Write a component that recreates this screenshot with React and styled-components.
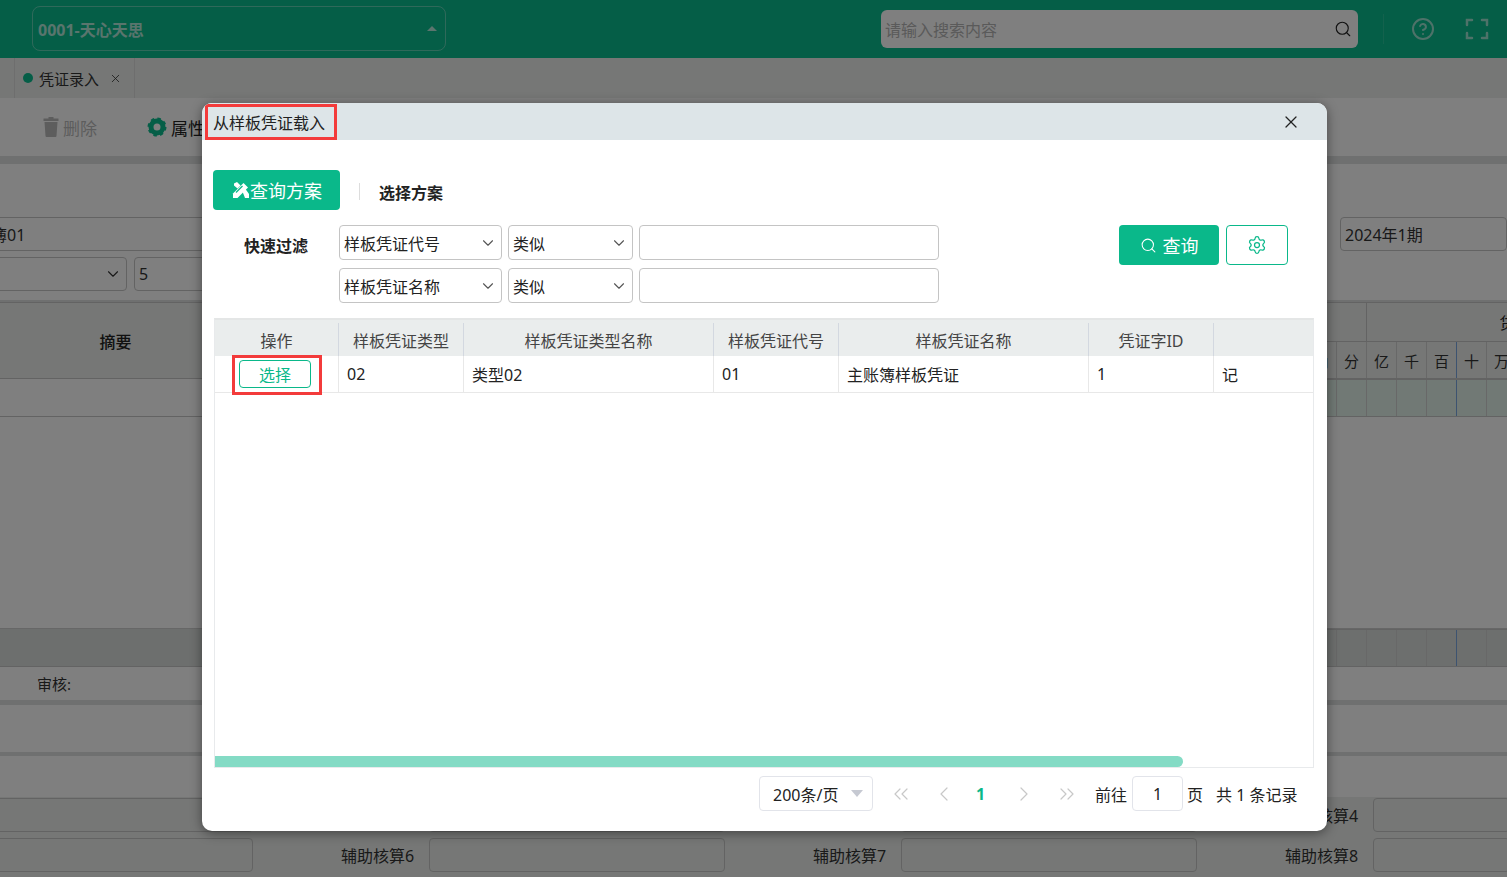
import React from "react"
import styled, { createGlobalStyle } from "styled-components"
import {
  ChevronDown,
  ChevronLeft,
  ChevronRight,
  ChevronsLeft,
  ChevronsRight,
  CircleHelp,
  Search,
  Settings,
  X,
} from "lucide-react"

const GlobalStyle = createGlobalStyle`
  html, body {
    margin: 0;
    height: 877px;
    overflow: hidden;
    background: #fff;
    font-family: "Noto Sans", "Noto Sans CJK SC", sans-serif;
    font-size: 16px;
    color: #222;
  }
  * { box-sizing: border-box; }
`

const Page = styled.div`
  position: relative;
  width: 1507px;
  height: 877px;
  overflow: hidden;
  display: flex;
  flex-direction: column;
`

const Header = styled.header`
  height: 58px;
  flex: none;
  background: #0abc8e;
  display: flex;
  align-items: center;
  padding: 0 18px 0 32px;
`

const OrgSelect = styled.div`
  width: 414px;
  height: 45px;
  margin-top: -1px;
  border: 1px solid rgba(255, 255, 255, 0.35);
  border-radius: 8px;
  display: flex;
  align-items: center;
  justify-content: space-between;
  padding: 0 8px 0 5px;
  color: rgba(255, 255, 255, 0.7);
  font-weight: 700;
  font-size: 16px;
`

const Caret = styled.span`
  width: 0;
  height: 0;
  border-left: 5px solid transparent;
  border-right: 5px solid transparent;
  border-bottom: 5px solid rgba(255, 255, 255, 0.7);
`

const SearchBox = styled.div`
  width: 477px;
  height: 38px;
  margin-left: auto;
  background: #fff;
  border-radius: 6px;
  display: flex;
  align-items: center;
  justify-content: space-between;
  padding: 0 6px 0 4px;
  color: #b4b4b4;
  & svg { color: #222; }
`

const HeaderDivider = styled.span`
  width: 1px;
  height: 30px;
  margin: 0 27px 0 25px;
  background: rgba(255, 255, 255, 0.12);
`

const HeaderIcon = styled.span`
  display: flex;
  color: rgba(255, 255, 255, 0.6);
  margin-right: ${(p) => p.$gap || 0}px;
`

const TabBar = styled.nav`
  height: 40px;
  flex: none;
  background: #ecefec;
  padding-left: 14px;
  display: flex;
`

const Tab = styled.div`
  width: 121px;
  border-left: 1px solid #dcdcdc;
  border-right: 1px solid #dcdcdc;
  display: flex;
  align-items: center;
  gap: 6px;
  padding-left: 8px;
  font-size: 15px;
  color: #333;
  & svg { margin-left: 4px; }
`

const Dot = styled.span`
  width: 10px;
  height: 10px;
  border-radius: 50%;
  background: #0abc8e;
`

const Toolbar = styled.div`
  height: 58px;
  flex: none;
  background: #fff;
  border-bottom: 0;
  display: flex;
  align-items: center;
  padding-left: 43px;
  gap: 50px;
`

const ToolButton = styled.div`
  display: flex;
  align-items: center;
  gap: 4px;
  color: ${(p) => (p.$muted ? "#bbb" : "#222")};
  font-size: 17px;
`

const ThickLine = styled.div`
  height: ${(p) => p.$h}px;
  flex: none;
  background: #dfe0e0;
`

const FormArea = styled.section`
  height: 136px;
  flex: none;
  background: #fff;
  padding-top: 53px;
  display: flex;
  flex-direction: column;
  gap: 6px;
`

const FormRow = styled.div`
  display: flex;
  gap: 7px;
  height: 34px;
  margin-left: -30px;
`

const Field = styled.div`
  width: ${(p) => p.$w}px;
  height: 34px;
  flex: none;
  margin-left: ${(p) => p.$ml || 0}px;
  border: 1px solid #c6c6c6;
  border-radius: 4px;
  display: flex;
  align-items: center;
  justify-content: space-between;
  padding: 0 4px;
  white-space: nowrap;
  color: #333;
`

const RowLabel = styled.span`
  flex: none;
  width: 40px;
  margin-left: auto;
  line-height: 34px;
  white-space: nowrap;
  color: #333;
`

const VoucherGrid = styled.div`
  display: grid;
  grid-template-columns: 232px 1fr 330px 141px;
  flex: none;
  overflow: hidden;
`

const HeadCell = styled.div`
  background: #ecefec;
  border-top: 1px solid #c6c6c6;
  border-bottom: 1px solid #c6c6c6;
  border-right: 1px solid #c6c6c6;
  height: 77px;
  display: flex;
  align-items: center;
  justify-content: center;
  font-weight: 500;
  color: #222;
`

const UnitGroup = styled.div`
  display: flex;
  flex-direction: column;
  height: ${(p) => p.$h}px;
  overflow: hidden;
`

const UnitTitle = styled.div`
  height: 39px;
  width: 330px;
  flex: none;
  background: #ecefec;
  border-top: 1px solid #c6c6c6;
  display: flex;
  align-items: center;
  justify-content: center;
  border-left: 1px solid #c6c6c6;
`

const UnitRow = styled.div`
  display: flex;
  height: ${(p) => p.$h}px;
  flex: none;
  background: ${(p) => p.$bg};
  border-top: 1px solid #c6c6c6;
  border-bottom: 1px solid #c6c6c6;
`

const UnitCell = styled.div`
  width: 30px;
  flex: none;
  border-left: 1px solid ${(p) => (p.$accent ? "#7aa7e0" : "#d0d0d0")};
  display: flex;
  align-items: center;
  justify-content: center;
  font-size: 15px;
  color: #333;
`

const BodyCell = styled.div`
  height: 38px;
  background: ${(p) => p.$bg};
  border-bottom: 1px solid #c6c6c6;
  border-right: 1px solid #d0d0d0;
`

const BlankArea = styled.div`
  height: ${(p) => p.$h}px;
  flex: none;
  background: ${(p) => p.$bg || "#fff"};
  border-bottom: ${(p) => (p.$line ? "1px solid #cfcfcf" : "0")};
  display: flex;
  align-items: center;
  padding-left: 37px;
  font-size: 15px;
  color: #333;
`

const AuxRow = styled.div`
  height: 40px;
  flex: none;
  background: #ecefec;
  padding-top: 1px;
  display: grid;
  grid-template-columns: 253px 88px 75px 13px 296px 88px 75px 13px 296px 88px 75px 13px 137px;
  align-items: start;
  font-size: 16px;
  color: #333;
`

const AuxInput = styled.div`
  height: 34px;
  grid-column: ${(p) => p.$col};
  border: 1px solid #c6c6c6;
  border-radius: 4px;
  margin-left: ${(p) => p.$bleed || 0}px;
`

const AuxLabel = styled.span`
  grid-column: ${(p) => p.$col};
  line-height: 36px;
  white-space: nowrap;
`

const Mask = styled.div`
  position: absolute;
  inset: 0;
  background: rgba(0, 0, 0, 0.5);
`

const Dialog = styled.div`
  position: absolute;
  top: 103px;
  left: 202px;
  width: 1125px;
  height: 728px;
  background: #fff;
  border-radius: 10px;
  box-shadow: 0 2px 12px rgba(0, 0, 0, 0.45);
  overflow: hidden;
`

const DialogHead = styled.div`
  height: 37px;
  background: #dde5e8;
  display: flex;
  align-items: center;
  justify-content: space-between;
  padding: 0 26px 0 11px;
  font-size: 16px;
  color: #222;
`

const PlanRow = styled.div`
  display: flex;
  align-items: center;
  margin: 30px 0 0 11px;
`

const PlanButton = styled.div`
  width: 127px;
  height: 40px;
  background: #0ab88a;
  border-radius: 4px;
  color: #fff;
  font-size: 18px;
  display: flex;
  align-items: center;
  padding-left: 19px;
`

const PlanDivider = styled.span`
  width: 1px;
  height: 17px;
  margin: 3px 19px 0;
  background: #ddd;
`

const PlanTitle = styled.span`
  font-weight: 700;
  font-size: 16px;
  margin-top: 3px;
  color: #222;
`

const FilterArea = styled.div`
  display: flex;
  margin: 15px 0 0 42px;
  height: 78px;
`

const FilterLabel = styled.div`
  width: 95px;
  font-weight: 700;
  color: #222;
  line-height: 24px;
  padding-top: 9px;
`

const FilterRows = styled.div`
  display: flex;
  flex-direction: column;
  gap: 8px;
`

const FilterRow = styled.div`
  display: flex;
  gap: 6px;
`

const SelectBox = styled.div`
  width: ${(p) => p.$w}px;
  height: 35px;
  border: 1px solid #c4c4c4;
  border-radius: 4px;
  background: #fff;
  display: flex;
  align-items: center;
  justify-content: space-between;
  padding: 0 4px;
  color: #222;
  & svg { color: #555; }
`

const FilterActions = styled.div`
  display: flex;
  gap: 7px;
  margin-left: 180px;
`

const QueryButton = styled.div`
  width: 100px;
  height: 40px;
  background: #0ab88a;
  border-radius: 4px;
  color: #fff;
  font-size: 18px;
  display: flex;
  align-items: center;
  justify-content: center;
  gap: 6px;
`

const GearButton = styled.div`
  width: 62px;
  height: 40px;
  border: 1px solid #0ab88a;
  border-radius: 4px;
  color: #0ab88a;
  display: flex;
  align-items: center;
  justify-content: center;
`

const TableWrap = styled.div`
  position: relative;
  width: 1100px;
  height: 450px;
  margin: 15px 0 0 12px;
  border: 1px solid #e8eaec;
  border-top: 2px solid #e4e6e6;
`

const TableRow = styled.div`
  display: grid;
  grid-template-columns: 124px 125px 250px 125px 250px 125px 1fr;
  height: ${(p) => p.$h}px;
  background: ${(p) => (p.$head ? "#eaeded" : "#fff")};
  border-bottom: ${(p) => (p.$head ? "0" : "1px solid #e8e8e8")};
`

const TableHead = styled.div`
  border-right: ${(p) => (p.$last ? "0" : "1px solid #d3d8e0")};
  margin: 3px 0 0;
  display: flex;
  align-items: center;
  justify-content: center;
  color: #444;
`

const TableCell = styled.div`
  border-right: ${(p) => (p.$last ? "0" : "1px solid #e8e8e8")};
  display: flex;
  align-items: center;
  justify-content: ${(p) => (p.$center ? "center" : "flex-start")};
  padding-left: ${(p) => (p.$center ? 0 : 8)}px;
  color: #222;
`

const PickButton = styled.div`
  width: 72px;
  height: 28px;
  margin-right: 3px;
  border: 1px solid #0ab88a;
  border-radius: 4px;
  color: #0ab88a;
  display: flex;
  align-items: center;
  justify-content: center;
`

const ScrollThumb = styled.div`
  position: absolute;
  left: 0;
  bottom: 0;
  width: 968px;
  height: 11px;
  border-radius: 0 6px 6px 0;
  background: #84dbc5;
`

const Pager = styled.div`
  display: flex;
  align-items: center;
  height: 35px;
  margin-top: 8px;
  padding-left: 557px;
  color: #222;
`

const PageSize = styled.div`
  width: 114px;
  height: 35px;
  border: 1px solid #e2e4ea;
  border-radius: 4px;
  display: flex;
  align-items: center;
  justify-content: space-between;
  padding: 0 9px 0 13px;
`

const PageCaret = styled.span`
  width: 0;
  height: 0;
  border-left: 6px solid transparent;
  border-right: 6px solid transparent;
  border-top: 7px solid #c6c9d2;
`

const PageNav = styled.div`
  width: ${(p) => p.$w}px;
  display: flex;
  justify-content: center;
  color: #c8c8c8;
`

const CurrentPage = styled.span`
  width: 43px;
  text-align: center;
  color: #0ab88a;
  font-weight: 700;
`

const PageInput = styled.div`
  width: 51px;
  height: 35px;
  margin: 0 4px 0 5px;
  border: 1px solid #e2e4ea;
  border-radius: 4px;
  display: flex;
  align-items: center;
  justify-content: center;
`

const PageTotal = styled.span`
  margin-left: 13px;
  white-space: nowrap;
`

const Annotation = styled.div`
  position: absolute;
  top: ${(p) => p.$top}px;
  left: ${(p) => p.$left}px;
  width: ${(p) => p.$w}px;
  height: ${(p) => p.$h}px;
  border: 3px solid #f33b3b;
  pointer-events: none;
`

function ToolsIcon() {
  return (
    <svg width="18" height="18" viewBox="0 0 18 18" fill="#fff">
      <path d="M1 12.5 11.5 2l4.5 4.5L5.5 17H1z" />
      <path d="M2 2.5 5 1l3.5 3.5-3 3L2 4.500z" />
      <path d="M10.500 10.500 13.500 8 17 13v4h-4z" />
      <path d="M4 11.500l6.500-6.500" stroke="#0ab88a" strokeWidth="1.200" />
    </svg>
  )
}

function TrashIcon() {
  return (
    <svg width="16" height="20" viewBox="0 0 16 20" fill="#bbb">
      <path d="M5.500 0h5v1.500h5V4H.500V1.500h5z" />
      <path d="M1.500 5h13l-1 14a1 1 0 0 1-1 1h-9a1 1 0 0 1-1-1z" />
    </svg>
  )
}

function GearIcon() {
  return (
    <svg width="20" height="20" viewBox="0 0 20 20">
      <circle cx="10" cy="10" r="6" fill="none" stroke="#0abc8e" strokeWidth="5" />
      <circle cx="10" cy="10" r="8" fill="none" stroke="#0abc8e" strokeWidth="3" strokeDasharray="3.300 3" />
    </svg>
  )
}

function FullscreenIcon() {
  return (
    <svg width="24" height="24" viewBox="0 0 24 24" fill="none" stroke="currentColor" strokeWidth="2.500" strokeLinecap="round">
      <path d="M2 8V3h5M17 3h5v5M22 16v5h-5M7 21H2v-5" />
    </svg>
  )
}

const debitUnits = ["亿", "千", "百", "十", "万", "千", "百", "十", "元", "角", "分"]
const creditUnits = ["亿", "千", "百", "十", "万"]
const columns = ["操作", "样板凭证类型", "样板凭证类型名称", "样板凭证代号", "样板凭证名称", "凭证字ID", ""]

function Units({ units, labels, bg, h }) {
  return (
    <UnitRow $bg={bg} $h={h}>
      {units.map((u, i) => (
        <UnitCell key={i} $accent={i === 3 || i === 6}>
          {labels && u}
        </UnitCell>
      ))}
    </UnitRow>
  )
}

export default function App() {
  return (
    <Page>
      <GlobalStyle />
      <Header>
        <OrgSelect>
          0001-天心天思
          <Caret />
        </OrgSelect>
        <SearchBox>
          请输入搜索内容
          <Search size={18} strokeWidth={1.5} />
        </SearchBox>
        <HeaderDivider />
        <HeaderIcon $gap={30}>
          <CircleHelp size={24} strokeWidth={2} />
        </HeaderIcon>
        <HeaderIcon>
          <FullscreenIcon />
        </HeaderIcon>
      </Header>

      <TabBar>
        <Tab>
          <Dot />
          凭证录入
          <X size={13} strokeWidth={1.5} />
        </Tab>
      </TabBar>

      <Toolbar>
        <ToolButton $muted>
          <TrashIcon />
          删除
        </ToolButton>
        <ToolButton>
          <GearIcon />
          属性
        </ToolButton>
      </Toolbar>
      <ThickLine $h={8} />

      <FormArea>
        <FormRow>
          <Field $w={400}>账簿01</Field>
          <RowLabel style={{ marginLeft: "auto" }}>期间</RowLabel>
          <Field $w={167} $ml={6}>2024年1期</Field>
        </FormRow>
        <FormRow>
          <Field $w={157}>
            <span />
            <ChevronDown size={18} strokeWidth={1.5} />
          </Field>
          <Field $w={200}>5</Field>
        </FormRow>
      </FormArea>
      <ThickLine $h={2} />

      <VoucherGrid>
        <HeadCell>摘要</HeadCell>
        <HeadCell />
        <UnitGroup $h={77}>
          <UnitTitle>借方金额</UnitTitle>
          <Units units={debitUnits} labels bg="#ecefec" h={38} />
        </UnitGroup>
        <UnitGroup $h={77}>
          <UnitTitle>贷方金额</UnitTitle>
          <Units units={creditUnits} labels bg="#ecefec" h={38} />
        </UnitGroup>
        <BodyCell $bg="#fff" />
        <BodyCell $bg="#fff" />
        <UnitGroup $h={38}>
          <Units units={debitUnits} bg="#e2f2ea" h={38} />
        </UnitGroup>
        <UnitGroup $h={38}>
          <Units units={creditUnits} bg="#e2f2ea" h={38} />
        </UnitGroup>
      </VoucherGrid>

      <BlankArea $h={212} $line />
      <VoucherGrid>
        <BodyCell $bg="#dadfdc" />
        <BodyCell $bg="#dadfdc" />
        <UnitGroup $h={38}>
          <Units units={debitUnits} bg="#dadfdc" h={38} />
        </UnitGroup>
        <UnitGroup $h={38}>
          <Units units={creditUnits} bg="#dadfdc" h={38} />
        </UnitGroup>
      </VoucherGrid>
      <BlankArea $h={33}>审核:</BlankArea>
      <ThickLine $h={5} />
      <BlankArea $h={47} />
      <ThickLine $h={4} />
      <BlankArea $h={41} />

      <AuxRow>
        <AuxInput $col="1" $bleed={-10} />
        <AuxLabel $col="3">辅助核算1</AuxLabel>
        <AuxInput $col="5" />
        <AuxLabel $col="7">辅助核算2</AuxLabel>
        <AuxInput $col="9" />
        <AuxLabel $col="11">辅助核算4</AuxLabel>
        <AuxInput $col="13" />
      </AuxRow>
      <AuxRow>
        <AuxInput $col="1" $bleed={-10} />
        <AuxLabel $col="3">辅助核算6</AuxLabel>
        <AuxInput $col="5" />
        <AuxLabel $col="7">辅助核算7</AuxLabel>
        <AuxInput $col="9" />
        <AuxLabel $col="11">辅助核算8</AuxLabel>
        <AuxInput $col="13" />
      </AuxRow>

      <Mask />

      <Dialog>
        <DialogHead>
          从样板凭证载入
          <X size={20} strokeWidth={1.5} color="#222" />
        </DialogHead>

        <PlanRow>
          <PlanButton>
            <ToolsIcon />
            查询方案
          </PlanButton>
          <PlanDivider />
          <PlanTitle>选择方案</PlanTitle>
        </PlanRow>

        <FilterArea>
          <FilterLabel>快速过滤</FilterLabel>
          <FilterRows>
            <FilterRow>
              <SelectBox $w={163}>
                样板凭证代号
                <ChevronDown size={18} strokeWidth={1.5} />
              </SelectBox>
              <SelectBox $w={125}>
                类似
                <ChevronDown size={18} strokeWidth={1.5} />
              </SelectBox>
              <SelectBox $w={300} />
            </FilterRow>
            <FilterRow>
              <SelectBox $w={163}>
                样板凭证名称
                <ChevronDown size={18} strokeWidth={1.5} />
              </SelectBox>
              <SelectBox $w={125}>
                类似
                <ChevronDown size={18} strokeWidth={1.5} />
              </SelectBox>
              <SelectBox $w={300} />
            </FilterRow>
          </FilterRows>
          <FilterActions>
            <QueryButton>
              <Search size={17} strokeWidth={1.5} />
              查询
            </QueryButton>
            <GearButton>
              <Settings size={20} strokeWidth={1.5} />
            </GearButton>
          </FilterActions>
        </FilterArea>

        <TableWrap>
          <TableRow $head $h={36}>
            {columns.map((c, i) => (
              <TableHead key={i} $last={i === columns.length - 1}>
                {c}
              </TableHead>
            ))}
          </TableRow>
          <TableRow $h={37}>
            <TableCell $center>
              <PickButton>选择</PickButton>
            </TableCell>
            <TableCell>02</TableCell>
            <TableCell>类型02</TableCell>
            <TableCell>01</TableCell>
            <TableCell>主账簿样板凭证</TableCell>
            <TableCell>1</TableCell>
            <TableCell $last>记</TableCell>
          </TableRow>
          <ScrollThumb />
        </TableWrap>

        <Pager>
          <PageSize>
            200条/页
            <PageCaret />
          </PageSize>
          <PageNav $w={56}>
            <ChevronsLeft size={24} strokeWidth={1.2} />
          </PageNav>
          <PageNav $w={30}>
            <ChevronLeft size={24} strokeWidth={1.2} />
          </PageNav>
          <CurrentPage>1</CurrentPage>
          <PageNav $w={43}>
            <ChevronRight size={24} strokeWidth={1.2} />
          </PageNav>
          <PageNav $w={43}>
            <ChevronsRight size={24} strokeWidth={1.2} />
          </PageNav>
          <PageNav $w={7} />
          前往
          <PageInput>1</PageInput>
          页
          <PageTotal>共 1 条记录</PageTotal>
        </Pager>

        <Annotation $top={1} $left={3} $w={132} $h={36} />
        <Annotation $top={252} $left={30} $w={90} $h={40} />
      </Dialog>
    </Page>
  )
}
